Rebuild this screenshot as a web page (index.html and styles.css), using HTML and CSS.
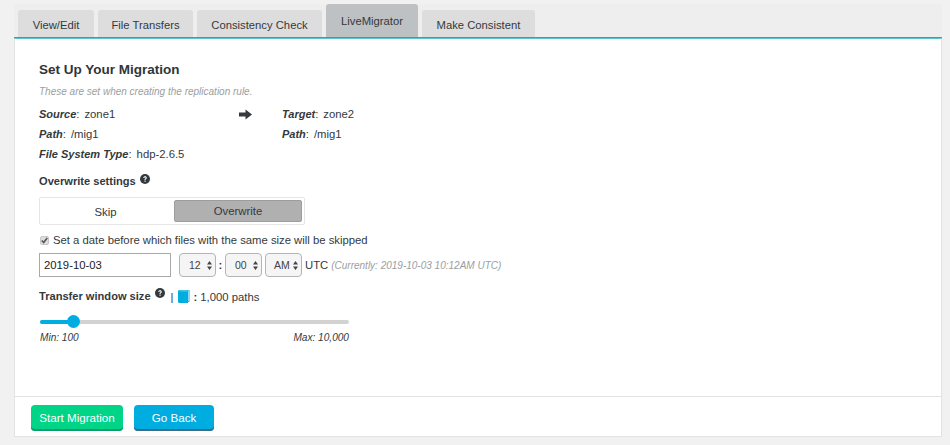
FILE: index.html
```html
<!DOCTYPE html>
<html lang="en">
<head>
<meta charset="utf-8">
<title>LiveMigrator</title>
<link rel="stylesheet" href="styles.css">
</head>
<body>
<div class="shell">
  <nav class="tabs">
    <div class="tab t1">View/Edit</div>
    <div class="tab t2">File Transfers</div>
    <div class="tab t3">Consistency Check</div>
    <div class="tab active t4">LiveMigrator</div>
    <div class="tab t5">Make Consistent</div>
  </nav>
  <main class="panel">
    <section class="body">
      <h2 class="title">Set Up Your Migration</h2>
      <p class="note">These are set when creating the replication rule.</p>
      <div class="meta">
        <div class="col-left">
          <div class="row"><em>Source</em>:<span class="val">zone1</span></div>
          <div class="row"><em>Path</em>:<span class="val">/mig1</span></div>
          <div class="row"><em>File System Type</em>:<span class="val">hdp-2.6.5</span></div>
        </div>
        <div class="col-arrow">
          <svg class="arrow" width="13" height="11" viewBox="0 0 13 11"><path d="M0 3.6h6.5V.6L13 5.5 6.5 10.4v-3H0z" fill="#33393d"/></svg>
        </div>
        <div class="col-right">
          <div class="row"><em>Target</em>:<span class="val">zone2</span></div>
          <div class="row"><em>Path</em>:<span class="val">/mig1</span></div>
        </div>
      </div>
      <div class="label overwrite-label">Overwrite settings
        <svg class="help" width="10" height="10" viewBox="0 0 10 10"><circle cx="5" cy="5" r="5" fill="#33393d"/><path d="M3.3 3.9c0-1 .8-1.6 1.8-1.6s1.7.6 1.7 1.5c0 1.200-1.300 1.200-1.300 2.100H4.500c0-1.500 1.200-1.400 1.200-2.100 0-.4-.3-.6-.7-.6s-.7.300-.7.700zM4.500 6.600h1.100v1.100H4.500z" fill="#fff"/></svg>
      </div>
      <div class="segment">
        <div class="seg-option">Skip</div>
        <div class="seg-option selected">Overwrite</div>
      </div>
      <label class="check-row">
        <span class="check"><svg width="7" height="7" viewBox="0 0 7 7"><path d="M.8 3.500 2.700 5.500 6.200 1" fill="none" stroke="#555" stroke-width="1.600"/></svg></span>
        Set a date before which files with the same size will be skipped
      </label>
      <div class="date-row">
        <div class="date-input">2019-10-03</div>
        <div class="select s-hour">12<svg class="updown" width="5" height="9" viewBox="0 0 5 9"><path d="M2.500 0 5 3.600H0zM2.500 9 0 5.400h5z" fill="#444"/></svg></div>
        <span class="colon">:</span>
        <div class="select s-min">00<svg class="updown" width="5" height="9" viewBox="0 0 5 9"><path d="M2.500 0 5 3.600H0zM2.500 9 0 5.400h5z" fill="#444"/></svg></div>
        <div class="select s-ampm">AM<svg class="updown" width="5" height="9" viewBox="0 0 5 9"><path d="M2.500 0 5 3.600H0zM2.500 9 0 5.400h5z" fill="#444"/></svg></div>
        <span class="utc">UTC</span>
        <em class="current">(Currently: 2019-10-03 10:12AM UTC)</em>
      </div>
      <div class="window-row">
        <span class="label">Transfer window size</span>
        <svg class="help help-b" width="10" height="10" viewBox="0 0 10 10"><circle cx="5" cy="5" r="5" fill="#33393d"/><path d="M3.3 3.9c0-1 .8-1.6 1.8-1.6s1.7.6 1.7 1.5c0 1.200-1.300 1.200-1.300 2.100H4.500c0-1.500 1.200-1.400 1.200-2.100 0-.4-.3-.6-.7-.6s-.7.300-.7.700zM4.500 6.600h1.100v1.100H4.500z" fill="#fff"/></svg>
        <span class="sep">|</span>
        <svg class="book" width="12" height="13" viewBox="0 0 12 13"><path d="M0 1.500C0 .6.600 0 1.500 0H11.500V11.500L10 12V13H1.500C.6 13 0 12.400 0 11.500z" fill="#00ade1"/><path d="M1.500 .5H11V1.200H1.500zM10 1.200h1v9.800H10z" fill="#8fd9f0"/></svg>
        <b class="colon2">:</b>
        <span>1,000 paths</span>
      </div>
      <div class="slider">
        <div class="track"></div>
        <div class="fill"></div>
        <div class="thumb"></div>
      </div>
      <div class="range"><em>Min: 100</em><em>Max: 10,000</em></div>
    </section>
    <footer class="actions">
      <button class="btn start">Start Migration</button>
      <button class="btn back">Go Back</button>
    </footer>
  </main>
</div>
</body>
</html>
```
FILE: styles.css
```css
* { box-sizing: border-box; }
html, body { margin: 0; padding: 0; }
body {
  width: 950px;
  height: 445px;
  background: #f1f1f1;
  font-family: "Liberation Sans", Arial, sans-serif;
  font-size: 11.3px;
  color: #33393d;
  padding: 4px 8px 0 14px;
  overflow: hidden;
}
.shell { width: 928px; }
.tabs {
  display: flex;
  align-items: flex-end;
  gap: 4px;
  height: 34px;
  padding: 0 0 0 4px;
  background: #eeeeee;
  border-bottom: 1px solid #2aa5b8;
}
.tab {
  height: 27px;
  background: #dddddd;
  border-radius: 3px 3px 0 0;
  text-align: center;
  line-height: 30px;
  color: #33393d;
  font-size: 11.25px;
}
.t1 { width: 76px; }
.t2 { width: 95px; }
.t3 { width: 125px; }
.t4 { width: 92px; }
.t5 { width: 113px; }
.tab.active {
  height: 33px;
  background: #bdc1c4;
  line-height: 34px;
}
.panel {
  height: 399px;
  background: #fff;
  border-left: 1px solid #e3e3e3;
  border-right: 1px solid #e3e3e3;
  border-bottom: 1px solid #e3e3e3;
  border-top: 1px solid #5cc3d1;
  display: flex;
  flex-direction: column;
}
.body { flex: 1; padding: 22px 24px 0; }
.title { margin: 0; font-size: 13.5px; line-height: 17px; font-weight: bold; color: #2f3539; }
.note { margin: 8px 0 0; font-size: 10px; line-height: 12px; font-style: italic; color: #9a9ea1; }
.meta { display: flex; margin-top: 6px; }
.col-left { width: 200px; }
.col-arrow { width: 43px; padding-top: 5px; }
.arrow { display: block; }
.row { height: 20px; line-height: 20px; }
.row em { font-weight: bold; font-size: 11px; }
.val { margin-left: 5px; }
.label { font-weight: bold; font-size: 11.1px; line-height: 15px; }
.overwrite-label { margin-top: 10px; display: flex; align-items: flex-start; gap: 4px; }
.help { flex: none; }
.segment {
  width: 266px;
  height: 28px;
  margin-top: 8px;
  border: 1px solid #e6e6e6;
  border-radius: 2px;
  padding: 2px;
  display: flex;
  justify-content: space-between;
}
.seg-option { text-align: center; line-height: 24px; }
.seg-option:first-child { width: 127px; }
.seg-option.selected {
  width: 128px;
  height: 22px;
  line-height: 21px;
  background: #b0b0b0;
  border: 1px solid #9d9d9d;
  border-radius: 2px;
}
.check-row { display: flex; align-items: center; gap: 4px; height: 14px; margin-top: 8px; padding-left: 1px; }
.check {
  width: 9px;
  height: 9px;
  background: #dedede;
  border: 1px solid #c6c6c6;
  border-radius: 2px;
  display: flex;
  align-items: center;
  justify-content: center;
}
.date-row { display: flex; align-items: center; margin-top: 6px; height: 24px; }
.date-input {
  width: 132px;
  height: 24px;
  border: 1px solid #a9a9a9;
  line-height: 22px;
  padding-left: 4px;
  color: #222;
  margin-right: 8px;
}
.select {
  height: 24px;
  border: 1px solid #b5b5b5;
  border-radius: 4px;
  background: #f5f5f5;
  display: flex;
  align-items: center;
  font-size: 10.5px;
  color: #444;
  justify-content: space-between;
}
.s-hour, .s-min { width: 37px; padding: 0 3px 0 9px; }
.s-ampm { width: 37px; padding: 0 3px 0 8px; margin-left: 3px; }
.colon { width: 9px; text-align: center; font-weight: bold; }
.utc { margin-left: 3px; }
.current { margin-left: 3px; font-size: 10px; color: #9a9ea1; }
.window-row { display: flex; align-items: center; margin-top: 12px; height: 15px; }
.help-b { margin: 0 0 8px 4px; }
.sep { margin: 0 4px 0 6px; }
.book { margin-right: 4px; }
.colon2 { margin-right: 3px; }
.slider { position: relative; width: 309px; height: 14px; margin: 11px 0 0 1px; }
.track { position: absolute; left: 0; right: 0; top: 5px; height: 4px; border-radius: 2px; background: #d2d2d2; }
.fill { position: absolute; left: 0; width: 33px; top: 5px; height: 4px; border-radius: 2px 0 0 2px; background: #00ade1; }
.thumb { position: absolute; left: 27px; top: 0; width: 13px; height: 13px; border-radius: 50%; background: #00ade1; }
.range { width: 310px; display: flex; justify-content: space-between; margin: 3px 0 0; padding-left: 1px; font-size: 10.1px; line-height: 12px; color: #33393d; }
.actions {
  height: 40px;
  border-top: 1px solid #e3e3e3;
  padding: 8px 0 0 16px;
  display: flex;
  align-items: flex-start;
  gap: 11px;
}
.btn {
  height: 26px;
  border: 0;
  border-radius: 4px;
  color: #fff;
  font-family: inherit;
  font-size: 11.6px;
  padding: 0 0 2px;
}
.start { width: 92px; background: #00d487; box-shadow: inset 0 -2px 0 #0f9b6b; }
.back { width: 80px; background: #00ade1; box-shadow: inset 0 -2px 0 #3d6d86; }
```
